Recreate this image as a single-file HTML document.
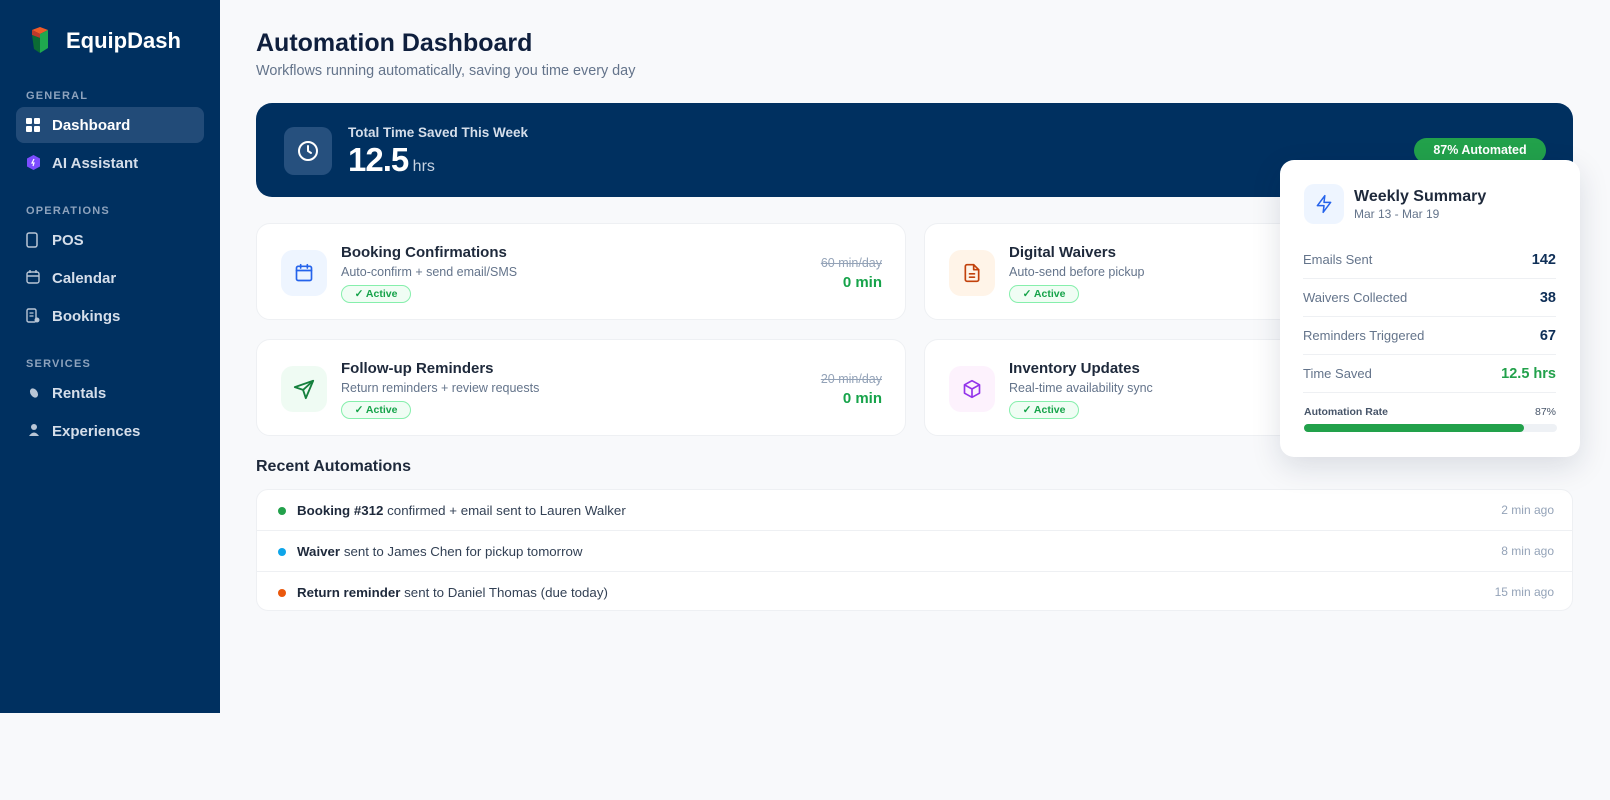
<!DOCTYPE html>
<html><head><meta charset="utf-8"><style>
*{box-sizing:border-box;margin:0;padding:0}
body{width:1610px;height:800px;background:#f8f9fb;font-family:"Liberation Sans",sans-serif;position:relative;overflow:hidden;color:#1e293b}
.a{position:absolute}
.side{left:0;top:0;width:220px;height:713px;background:#003060}
.sec{font-size:11px;font-weight:bold;letter-spacing:1.2px;color:#8ea3bd;left:26px}
.nav{left:52px;font-size:15px;color:#d5deea;font-weight:bold}
.card{background:#fff;border:1px solid #eef0f3;border-radius:14px;width:650px;height:97px}
.ib{left:24px;top:26px;width:46px;height:46px;border-radius:12px;display:flex;align-items:center;justify-content:center}
.ct{left:84px;top:20px;font-size:15px;font-weight:bold;color:#1e293b}
.cd{left:84px;top:41px;font-size:12.5px;color:#64748b}
.act{left:84px;top:61px;width:70px;height:18px;border:1px solid #86efac;border-radius:9px;background:#f0fdf4;color:#16a34a;font-size:10.5px;font-weight:bold;text-align:center;line-height:16px}
.old{right:23px;top:32px;font-size:12.5px;color:#94a3b8;text-decoration:line-through}
.new{right:23px;top:50px;font-size:15px;color:#16a34a;font-weight:bold}
.row{left:0;width:1317px;height:41px;border-bottom:1px solid #eef0f3;font-size:13.3px;color:#334155;line-height:41px;padding-left:40px}
.row b{color:#1e293b}
.dot{left:21px;top:17px;width:8px;height:8px;border-radius:50%}
.tm{right:20px;top:0;font-size:12px;color:#94a3b8}
.wr{left:23px;width:253px;height:38px;border-bottom:1px solid #eef0f3;font-size:13px;color:#64748b;line-height:38px}
.wr b{position:absolute;right:0;color:#0f2f57;font-size:14.5px}
</style></head><body>
<div class="a side">
 <svg class="a" style="left:28px;top:26px" width="24" height="28" viewBox="0 0 24 28"><path d="M4 4 L12 1 L20 4 L12 8Z" fill="#f05a28"/><path d="M4 4 L12 8 L12 12 L4 9Z" fill="#c0392b"/><path d="M12 8 L20 4 L20 22 L12 27Z" fill="#1fa84f"/><path d="M4 9 L12 12 L12 27 L6 23Z" fill="#0b6b35"/></svg>
 <div class="a" style="left:66px;top:28px;font-size:22px;font-weight:bold;color:#fff">EquipDash</div>
 <div class="a sec" style="top:90px">GENERAL</div>
 <div class="a" style="left:16px;top:107px;width:188px;height:36px;background:#224b78;border-radius:8px"></div>
 <svg class="a" style="left:26px;top:118px" width="14" height="14"><rect x="0" y="0" width="6" height="6" rx="1" fill="#fff"/><rect x="8" y="0" width="6" height="6" rx="1" fill="#fff"/><rect x="0" y="8" width="6" height="6" rx="1" fill="#fff"/><rect x="8" y="8" width="6" height="6" rx="1" fill="#fff"/></svg>
 <div class="a nav" style="top:117px;color:#fff">Dashboard</div>
 <svg class="a" style="left:27px;top:155px" width="13" height="15"><path d="M6.5 0 L13 3.5 V11.5 L6.5 15 L0 11.5 V3.5Z" fill="#7c4dff"/><path d="M7 4 L5 8 H7 L6 11" stroke="#fff" stroke-width="1.2" fill="none"/></svg>
 <div class="a nav" style="top:155px">AI Assistant</div>
 <div class="a sec" style="top:205px">OPERATIONS</div>
 <svg class="a" style="left:26px;top:232px" width="12" height="16"><rect x="1" y="1" width="10" height="14" rx="2" stroke="#b9c6d6" stroke-width="1.5" fill="none"/></svg>
 <div class="a nav" style="top:232px">POS</div>
 <svg class="a" style="left:26px;top:270px" width="14" height="14"><rect x="1" y="2" width="12" height="11" rx="2" stroke="#b9c6d6" stroke-width="1.4" fill="none"/><path d="M1 6H13M4 0V3M10 0V3" stroke="#b9c6d6" stroke-width="1.4"/></svg>
 <div class="a nav" style="top:270px">Calendar</div>
 <svg class="a" style="left:26px;top:308px" width="14" height="16"><rect x="1" y="1" width="9" height="13" rx="1.5" stroke="#b9c6d6" stroke-width="1.4" fill="none"/><path d="M3.5 5H7.5M3.5 8H7.5" stroke="#b9c6d6" stroke-width="1.2"/><circle cx="11" cy="12" r="2.5" fill="#b9c6d6"/></svg>
 <div class="a nav" style="top:308px">Bookings</div>
 <div class="a sec" style="top:358px">SERVICES</div>
 <svg class="a" style="left:28px;top:387px" width="12" height="12"><ellipse cx="6" cy="6" rx="3.5" ry="5" transform="rotate(-35 6 6)" fill="#b9c6d6"/></svg>
 <div class="a nav" style="top:385px">Rentals</div>
 <svg class="a" style="left:28px;top:423px" width="12" height="14"><circle cx="6" cy="4" r="3" fill="#b9c6d6"/><path d="M1 13 Q6 6 11 13Z" fill="#b9c6d6"/></svg>
 <div class="a nav" style="top:423px">Experiences</div>
</div>

<div class="a" style="left:256px;top:29px;font-size:25px;font-weight:bold;color:#0f1f3d">Automation Dashboard</div>
<div class="a" style="left:256px;top:63px;font-size:14.4px;color:#64748b">Workflows running automatically, saving you time every day</div>

<div class="a" style="left:256px;top:103px;width:1317px;height:94px;background:#003060;border-radius:16px">
 <div class="a" style="left:28px;top:24px;width:48px;height:48px;border-radius:10px;background:#26507e;display:flex;align-items:center;justify-content:center">
  <svg width="24" height="24" viewBox="0 0 24 24" fill="none" stroke="#fff" stroke-width="2" stroke-linecap="round"><circle cx="12" cy="12" r="9"/><path d="M12 7v5l3 2"/></svg></div>
 <div class="a" style="left:92px;top:22px;font-size:13.5px;color:#d5deea;font-weight:bold">Total Time Saved This Week</div>
 <div class="a" style="left:92px;top:38px;color:#fff;font-size:33px;font-weight:bold;letter-spacing:-1px">12.5<span style="font-size:16px;font-weight:normal;color:#c7d3e2;letter-spacing:0"> hrs</span></div>
 <div class="a" style="left:1158px;top:35px;width:132px;height:25px;border-radius:13px;background:#22a14b;color:#fff;font-size:12.5px;font-weight:bold;text-align:center;line-height:25px">87% Automated</div>
</div>

<div class="a card" style="left:256px;top:223px">
 <div class="a ib" style="background:#eef5ff"><svg width="20" height="20" viewBox="0 0 24 24" fill="none" stroke="#2563eb" stroke-width="2" stroke-linecap="round"><rect x="3" y="4" width="18" height="17" rx="2"/><path d="M3 9h18M8 2v4M16 2v4"/></svg></div>
 <div class="a ct">Booking Confirmations</div><div class="a cd">Auto-confirm + send email/SMS</div><div class="a act">✓ Active</div>
 <div class="a old">60 min/day</div><div class="a new">0 min</div>
</div>
<div class="a card" style="left:924px;top:223px">
 <div class="a ib" style="background:#fff4e8"><svg width="20" height="20" viewBox="0 0 24 24" fill="none" stroke="#c2410c" stroke-width="2" stroke-linecap="round" stroke-linejoin="round"><path d="M14 2H6a2 2 0 0 0-2 2v16a2 2 0 0 0 2 2h12a2 2 0 0 0 2-2V8z"/><path d="M14 2v6h6M9 13h6M9 17h6"/></svg></div>
 <div class="a ct">Digital Waivers</div><div class="a cd">Auto-send before pickup</div><div class="a act">✓ Active</div>
</div>
<div class="a card" style="left:256px;top:339px">
 <div class="a ib" style="background:#effbf3"><svg width="22" height="22" viewBox="0 0 24 24" fill="none" stroke="#15803d" stroke-width="2" stroke-linejoin="round"><path d="M22 3 L2 10 L11 13 L14 22Z"/><path d="M22 3 L11 13"/></svg></div>
 <div class="a ct">Follow-up Reminders</div><div class="a cd">Return reminders + review requests</div><div class="a act">✓ Active</div>
 <div class="a old">20 min/day</div><div class="a new">0 min</div>
</div>
<div class="a card" style="left:924px;top:339px">
 <div class="a ib" style="background:#fdf2fd"><svg width="20" height="20" viewBox="0 0 24 24" fill="none" stroke="#9333ea" stroke-width="2" stroke-linejoin="round"><path d="M12 2 L21 7 V17 L12 22 L3 17 V7Z"/><path d="M3 7 L12 12 L21 7M12 12V22"/></svg></div>
 <div class="a ct">Inventory Updates</div><div class="a cd">Real-time availability sync</div><div class="a act">✓ Active</div>
</div>

<div class="a" style="left:256px;top:458px;font-size:16px;font-weight:bold;color:#1e293b">Recent Automations</div>
<div class="a" style="left:256px;top:489px;width:1317px;height:122px;background:#fff;border:1px solid #eef0f3;border-radius:12px;overflow:hidden">
 <div class="a row" style="top:0"><div class="a dot" style="background:#22a14b"></div><b>Booking #312</b> confirmed + email sent to Lauren Walker<div class="a tm">2 min ago</div></div>
 <div class="a row" style="top:41px"><div class="a dot" style="background:#0ea5e9"></div><b>Waiver</b> sent to James Chen for pickup tomorrow<div class="a tm">8 min ago</div></div>
 <div class="a row" style="top:82px;border:0"><div class="a dot" style="background:#ea580c"></div><b>Return reminder</b> sent to Daniel Thomas (due today)<div class="a tm">15 min ago</div></div>
</div>

<div class="a" style="left:1280px;top:160px;width:300px;height:297px;background:#fff;border-radius:14px;box-shadow:0 10px 30px rgba(15,30,60,.13)">
 <div class="a" style="left:24px;top:24px;width:40px;height:40px;border-radius:10px;background:#eef5ff;display:flex;align-items:center;justify-content:center"><svg width="20" height="20" viewBox="0 0 24 24" fill="none" stroke="#2563eb" stroke-width="1.8" stroke-linejoin="round"><path d="M13 2 L4 14 H12 L11 22 L20 10 H12Z"/></svg></div>
 <div class="a" style="left:74px;top:28px;font-size:16px;font-weight:bold;color:#1e293b">Weekly Summary</div>
 <div class="a" style="left:74px;top:47px;font-size:12px;color:#64748b">Mar 13 - Mar 19</div>
 <div class="a wr" style="top:81px">Emails Sent<b>142</b></div>
 <div class="a wr" style="top:119px">Waivers Collected<b>38</b></div>
 <div class="a wr" style="top:157px">Reminders Triggered<b>67</b></div>
 <div class="a wr" style="top:195px">Time Saved<b style="color:#22a14b">12.5 hrs</b></div>
 <div class="a" style="left:24px;top:246px;font-size:10.5px;font-weight:bold;color:#475569">Automation Rate</div>
 <div class="a" style="right:24px;top:246px;font-size:10.5px;color:#475569">87%</div>
 <div class="a" style="left:24px;top:264px;width:253px;height:8px;border-radius:4px;background:#eef1f5"><div style="width:87%;height:8px;border-radius:4px;background:#22a14b"></div></div>
</div>
</body></html>
